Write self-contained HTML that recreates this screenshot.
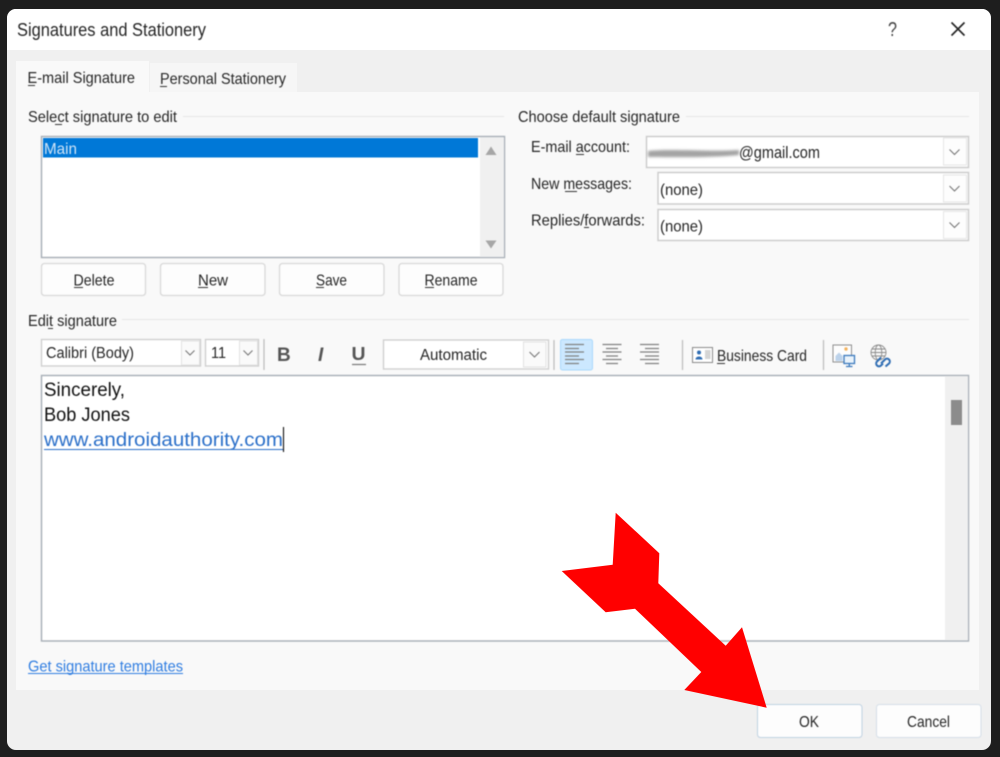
<!DOCTYPE html>
<html><head><meta charset="utf-8"><title>Signatures and Stationery</title>
<style>
html,body{margin:0;padding:0;background:#1e1e1e;width:1000px;height:757px;overflow:hidden}
svg{display:block}
text{font-family:"Liberation Sans",sans-serif;fill:#262626}
.soft{filter:blur(.4px)}
</style></head><body>
<svg width="1000" height="757" viewBox="0 0 1000 757" xmlns="http://www.w3.org/2000/svg">
<rect width="1000" height="757" fill="#1e1e1e"/>
<rect x="7" y="9" width="984" height="741" rx="9" fill="#f0f0f0"/>
<path d="M7 50V18a9 9 0 0 1 9-9H982a9 9 0 0 1 9 9V50Z" fill="#fff"/>
<rect x="16" y="92" width="963" height="598" fill="#f9f9f9"/>
<rect x="16" y="61" width="133" height="32" fill="#f9f9f9"/>
<rect x="150" y="63" width="147" height="29" fill="#f6f6f6"/>

<g class="soft">
<text x="17" y="36" font-size="18" textLength="189" lengthAdjust="spacingAndGlyphs">Signatures and Stationery</text>
<text x="888" y="36" font-size="20" textLength="9" lengthAdjust="spacingAndGlyphs" style="fill:#444">?</text>
<path d="M951.500 22.500L964.500 35.500M964.500 22.500L951.500 35.500" stroke="#222" stroke-width="1.600" fill="none"/>

<text x="27.500" y="83" font-size="16" textLength="107.500" lengthAdjust="spacingAndGlyphs">E-mail Signature</text>
<path d="M28 85.500H35" stroke="#333"/>
<text x="160" y="84" font-size="16" textLength="126" lengthAdjust="spacingAndGlyphs">Personal Stationery</text>
<path d="M160 86.500H167" stroke="#333"/>

<text x="28" y="122" font-size="16" textLength="149" lengthAdjust="spacingAndGlyphs">Select signature to edit</text>
<path d="M55 124.500H62" stroke="#333"/>
<path d="M183 116.500H504" stroke="#e6e6e6"/>

<rect x="41.500" y="136.500" width="463" height="121" fill="#fff" stroke="#a6adb5" stroke-width="1.400"/>
<rect x="480" y="137.500" width="24" height="119.500" fill="#f0f0f0"/>
<rect x="43" y="138" width="435" height="19.500" fill="#0078d7"/>
<text x="44" y="154" font-size="16" textLength="33" lengthAdjust="spacingAndGlyphs" style="fill:#cfe4f7">Main</text>
<path d="M491 146.500L496.500 155H485.500Z" fill="#a6a6a6"/>
<path d="M491 248.500L496.500 240.500H485.500Z" fill="#a6a6a6"/>

<g fill="#fdfdfd" stroke="#d8d8d8" stroke-width="1.300">
<rect x="41.500" y="263.500" width="104" height="32" rx="3"/>
<rect x="160.500" y="263.500" width="104.500" height="32" rx="3"/>
<rect x="279.500" y="263.500" width="104.500" height="32" rx="3"/>
<rect x="399" y="263.500" width="104" height="32" rx="3"/>
</g>
<text x="73.500" y="285.500" font-size="16" textLength="41" lengthAdjust="spacingAndGlyphs">Delete</text>
<path d="M74 287.500H83" stroke="#333"/>
<text x="198" y="285.500" font-size="16" textLength="30" lengthAdjust="spacingAndGlyphs">New</text>
<path d="M198 287.500H208" stroke="#333"/>
<text x="316" y="285.500" font-size="16" textLength="31" lengthAdjust="spacingAndGlyphs">Save</text>
<path d="M316 287.500H324" stroke="#333"/>
<text x="424.500" y="285.500" font-size="16" textLength="53" lengthAdjust="spacingAndGlyphs">Rename</text>
<path d="M425 287.500H434" stroke="#333"/>

<text x="518" y="122" font-size="16" textLength="162" lengthAdjust="spacingAndGlyphs">Choose default signature</text>
<path d="M686 116.500H969" stroke="#e6e6e6"/>

<text x="531" y="152" font-size="16" textLength="99" lengthAdjust="spacingAndGlyphs">E-mail account:</text>
<path d="M576 154.500H584" stroke="#333"/>
<text x="531" y="189" font-size="16" textLength="101" lengthAdjust="spacingAndGlyphs">New messages:</text>
<path d="M565 191.500H577" stroke="#333"/>
<text x="531" y="225.500" font-size="16" textLength="114" lengthAdjust="spacingAndGlyphs">Replies/forwards:</text>
<path d="M584 227.500H589" stroke="#333"/>

<g fill="#fff" stroke="#cacaca" stroke-width="1.400">
<rect x="646.500" y="136.500" width="322" height="31"/>
<rect x="658" y="172.500" width="310.500" height="31.500"/>
<rect x="658" y="209.500" width="310.500" height="31"/>
</g>
<g fill="#fdfdfd" stroke="#e6e6e6">
<rect x="943.500" y="138" width="23" height="27"/>
<rect x="943.500" y="175" width="23" height="27"/>
<rect x="943.500" y="211.500" width="23" height="27"/>
</g>
<g fill="none" stroke="#777" stroke-width="1.100">
<path d="M949.500 149.500L954.500 154.500L959.500 149.500"/>
<path d="M949.500 186L954.500 191L959.500 186"/>
<path d="M949.500 222.500L954.500 227.500L959.500 222.500"/>
</g>
<path d="M648 151C670 148.500 710 152 739 150V155C710 158 670 157 648 157Z" fill="#a3a3a3" style="filter:blur(1.300px)"/>
<text x="739" y="158" font-size="16.500" textLength="81" lengthAdjust="spacingAndGlyphs">@gmail.com</text>
<text x="660" y="195" font-size="16" textLength="43" lengthAdjust="spacingAndGlyphs">(none)</text>
<text x="660" y="231.500" font-size="16" textLength="43" lengthAdjust="spacingAndGlyphs">(none)</text>

<text x="28" y="326" font-size="16" textLength="89" lengthAdjust="spacingAndGlyphs">Edit signature</text>
<path d="M48 328.500H53" stroke="#333"/>
<path d="M122 319.500H969" stroke="#e6e6e6"/>

<g fill="#fff" stroke="#cdcdcd" stroke-width="1.300">
<rect x="41.500" y="339.500" width="159" height="26.500"/>
<rect x="205.500" y="339.500" width="53" height="26.500"/>
<rect x="383.500" y="340" width="165" height="29"/>
</g>
<g fill="#fafafa" stroke="#e2e2e2">
<rect x="181.500" y="341" width="18" height="24"/>
<rect x="239.500" y="341" width="18" height="24"/>
<rect x="523.500" y="342" width="22.500" height="25"/>
</g>
<g fill="none" stroke="#777" stroke-width="1.100">
<path d="M185.500 350.500L190 355L194.500 350.500"/>
<path d="M243.500 350.500L248 355L252.500 350.500"/>
<path d="M529.500 352L534.500 357L539.500 352"/>
</g>
<text x="46" y="358" font-size="15.500" textLength="88" lengthAdjust="spacingAndGlyphs">Calibri (Body)</text>
<text x="211" y="358" font-size="15.500" textLength="15" lengthAdjust="spacingAndGlyphs">11</text>
<text x="420" y="360" font-size="15.500" textLength="67" lengthAdjust="spacingAndGlyphs">Automatic</text>

<g stroke="#bcbcbc" stroke-width="1.200">
<path d="M264 339V370M554 340V370M682.500 340V370M823.500 340V370"/>
</g>
<text x="277" y="361" font-size="19" font-weight="700" style="fill:#555">B</text>
<text x="318" y="361" font-size="19" font-weight="700" font-style="italic" style="fill:#555">I</text>
<text x="351.500" y="360" font-size="18" font-weight="700" style="fill:#555" textLength="14" lengthAdjust="spacingAndGlyphs">U</text>
<path d="M352 364.500H366" stroke="#777" stroke-width="1.200"/>

<rect x="560.500" y="339.500" width="32" height="30.500" rx="2" fill="#cce8ff" stroke="#a9d8fb"/>
<g stroke="#808080" stroke-width="1.300">
<path d="M565 344.500H584M565 348.500H579M565 352H584M565 356H579M565 359.500H584M565 363.500H579"/>
<path d="M602.500 344.500H621.500M606 348.500H618M602.500 352H621.500M606 356H618M602.500 359.500H621.500M606 363.500H618"/>
<path d="M640 344.500H659M645 348.500H659M640 352H659M645 356H659M640 359.500H659M645 363.500H659"/>
</g>

<rect x="692.500" y="347.500" width="20" height="15" fill="#fff" stroke="#8a8a8a"/>
<circle cx="699" cy="352.500" r="2" fill="#2f6db3"/>
<path d="M695.500 359.500C695.500 355.500 702.500 355.500 702.500 359.500Z" fill="#2f6db3"/>
<rect x="705" y="350" width="5.500" height="9" fill="#d5d5d5"/>
<text x="717" y="361" font-size="16" textLength="90" lengthAdjust="spacingAndGlyphs">Business Card</text>
<path d="M717 363.500H725" stroke="#333"/>

<rect x="833" y="345" width="18.500" height="17" fill="#fdfdfd" stroke="#8f8f8f"/>
<circle cx="846" cy="349" r="1.700" fill="#f3b35e"/>
<path d="M835.500 361V356L839 352.500L842.500 356V361Z" fill="#bcd2ea"/>
<rect x="844" y="355.500" width="10.500" height="8" fill="#eaf3fb" stroke="#3b79bd" stroke-width="1.300"/>
<path d="M849.300 363.500V366M846 366.500H852.500" stroke="#3b79bd" stroke-width="1.300"/>

<g fill="none" stroke="#8a8a8a" stroke-width=".9">
<circle cx="878.500" cy="352.500" r="7.500"/>
<ellipse cx="878.500" cy="352.500" rx="3.300" ry="7.500"/>
<path d="M871 352.500H886M872 349H885M872 356H885"/>
</g>
<g fill="none" stroke="#2f6db3" stroke-width="2">
<path d="M881 357.500L877 361.500a2.800 2.800 0 0 0 4 4L883 363.500"/>
<path d="M881 363.500L885 359.500a2.800 2.800 0 0 1 4 4L885.500 366.500"/>
</g>

<rect x="41.500" y="375.500" width="927" height="265.500" fill="#fff" stroke="#a6adb5" stroke-width="1.400"/>
<rect x="945" y="376.200" width="23" height="264" fill="#f0f0f0"/>
<rect x="951" y="400" width="11" height="25" fill="#8c8c8c"/>
<text x="44" y="396" font-size="19" textLength="81" lengthAdjust="spacingAndGlyphs" style="fill:#111">Sincerely,</text>
<text x="44" y="421" font-size="19" textLength="86" lengthAdjust="spacingAndGlyphs" style="fill:#111">Bob Jones</text>
<text x="44" y="446" font-size="19" textLength="239" lengthAdjust="spacingAndGlyphs" style="fill:#2a6fc9">www.androidauthority.com</text>
<path d="M44 449.500H283" stroke="#2a6fc9"/>
<path d="M283.500 427V452" stroke="#111" stroke-width="1.100"/>

<text x="28" y="671.500" font-size="16" textLength="155" lengthAdjust="spacingAndGlyphs" style="fill:#2f7de1">Get signature templates</text>
<path d="M28 673.500H183" stroke="#2f7de1"/>

<g fill="#fdfdfd">
<rect x="757.500" y="704.500" width="104.500" height="33" rx="3" stroke="#c0d2e2"/>
<rect x="876.500" y="704.500" width="104.500" height="33" rx="3" stroke="#d5dfe8"/>
</g>
<text x="799" y="727" font-size="16" textLength="20" lengthAdjust="spacingAndGlyphs">OK</text>
<text x="907" y="727" font-size="16" textLength="43" lengthAdjust="spacingAndGlyphs">Cancel</text>
</g>

<polygon points="615.700,512.700 659.300,553.300 658.300,583.300 725.700,645.700 742,627.300 766.700,707.700 684.300,690 701.300,672 635,608.700 605.700,612.300 561.700,571 612.700,564.700" fill="#ff0000"/>
</svg>
</body></html>
